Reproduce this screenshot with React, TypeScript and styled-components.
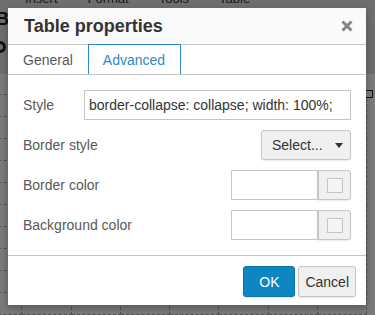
import React from "react"
import styled, { createGlobalStyle } from "styled-components"

const GlobalStyle = createGlobalStyle`
  html, body {
    margin: 0;
    padding: 0;
    background: #fff;
  }
  body {
    font-family: "Liberation Sans", Arial, sans-serif;
    overflow: hidden;
  }
  * {
    box-sizing: border-box;
  }
`

const Page = styled.div`
  position: relative;
  width: 375px;
  height: 315px;
  overflow: hidden;
`

/* editor that sits behind the modal */
const Editor = styled.div`
  display: flex;
  flex-direction: column;
  background: #fff;
  height: 100%;
`

const Chrome = styled.div`
  background: #e6e6e6;
  height: 76px;
  overflow: hidden;
`

const MenuBar = styled.div`
  display: flex;
  gap: 30px;
  padding-left: 25px;
  margin-top: -8px;
  height: 14px;
  line-height: 14px;
  font-size: 13px;
  color: #333;
`

const ToolRow = styled.div`
  display: flex;
  align-items: center;
  height: 27px;
  color: #222;
  &:first-of-type {
    margin-top: 10px;
  }
`

const BoldGlyph = styled.span`
  font-weight: 700;
  font-size: 18px;
  margin-left: -4px;
`

const Content = styled.div`
  padding-top: 20px;
  flex: 1;
`

const TableWrap = styled.div`
  position: relative;
  width: 395px;
  margin-left: -28px;
`

const EditorTable = styled.table`
  border-collapse: collapse;
  width: 100%;
  table-layout: fixed;

  td {
    border: 1px dashed #aaa;
    height: 22px;
    padding: 0;
  }
`

const ResizeHandle = styled.div`
  position: absolute;
  top: -4px;
  right: -6px;
  width: 8px;
  height: 8px;
  border: 1px solid #222;
  background: #fff;
`

const Overlay = styled.div`
  position: absolute;
  inset: 0;
  background: rgba(0, 0, 0, 0.52);
`

/* modal */
const Dialog = styled.div`
  position: absolute;
  left: 8px;
  top: 8px;
  width: 358px;
  height: 297px;
  background: #fff;
  display: flex;
  flex-direction: column;
  box-shadow: 0 3px 7px rgba(0, 0, 0, 0.3);
`

const Head = styled.div`
  height: 37px;
  display: flex;
  align-items: center;
  justify-content: space-between;
  padding: 0 13px 0 16px;
  background: #fafafa;
  border-bottom: 1px solid #c5c5c5;
`

const Title = styled.div`
  font-size: 18px;
  font-weight: 700;
  color: #333;
`

const CloseButton = styled.button`
  border: 0;
  background: none;
  padding: 0;
  width: 12px;
  height: 12px;
  display: flex;
  cursor: pointer;
`

const Tabs = styled.div`
  display: flex;
  height: 30px;
  border-bottom: 1px solid #c5c5c5;
`

const Tab = styled.div<{ $active?: boolean }>`
  height: ${(p) => (p.$active ? "30px" : "29px")};
  margin-top: ${(p) => (p.$active ? "-1px" : "0")};
  display: flex;
  align-items: center;
  padding: ${(p) => (p.$active ? "0 15px 0 14px" : "0 15px")};
  font-size: 14px;
  color: ${(p) => (p.$active ? "#2d8ac7" : "#595959")};
  border: ${(p) => (p.$active ? "1px solid #2d8ac7" : "0")};
  border-bottom: 0;
  background: #fff;
  cursor: pointer;
`

const Body = styled.div`
  flex: 1;
  display: flex;
  flex-direction: column;
  gap: 10px;
  padding: 15px;
`

const Row = styled.div`
  display: flex;
  align-items: center;
  justify-content: space-between;
  height: 30px;
`

const Label = styled.label`
  font-size: 14px;
  color: #595959;
`

const TextInput = styled.input<{ $width: number }>`
  width: ${(p) => p.$width}px;
  height: 30px;
  border: 1px solid #c5c5c5;
  padding: 0 4px;
  font-family: inherit;
  font-size: 14px;
  color: #333;
  background: #fff;
  outline: none;
`

const SelectButton = styled.button`
  width: 90px;
  height: 30px;
  display: flex;
  align-items: center;
  justify-content: space-between;
  padding: 0 7px 0 10px;
  border: 1px solid #c5c5c5;
  border-radius: 3px;
  background: #f0f0f0;
  box-shadow: 0 1px 1px rgba(0, 0, 0, 0.08);
  font-family: inherit;
  font-size: 14px;
  color: #333;
`

const Caret = styled.span`
  width: 0;
  height: 0;
  border-left: 4px solid transparent;
  border-right: 4px solid transparent;
  border-top: 5px solid #333;
`

const ColorGroup = styled.div`
  display: flex;
`

const SwatchButton = styled.button`
  width: 33px;
  height: 30px;
  display: flex;
  align-items: center;
  justify-content: center;
  padding: 0;
  border: 1px solid #c5c5c5;
  border-radius: 0 3px 3px 0;
  background: #f0f0f0;
  box-shadow: 0 1px 1px rgba(0, 0, 0, 0.08);
`

const Swatch = styled.span`
  width: 16px;
  height: 15px;
  border: 1px solid #c5c5c5;
  background: #f4f4f4;
`

const Foot = styled.div`
  height: 50px;
  display: flex;
  justify-content: flex-end;
  align-items: flex-start;
  gap: 3px;
  padding: 10px 10px 0 0;
  border-top: 1px solid #c5c5c5;
`

const Button = styled.button<{ $primary?: boolean }>`
  height: 31px;
  min-width: 52px;
  padding: 0 6px;
  border-radius: 3px;
  font-family: inherit;
  font-size: 14px;
  border: 1px solid ${(p) => (p.$primary ? "#0b74a8" : "#c5c5c5")};
  background: ${(p) => (p.$primary ? "#0c87c2" : "#f0f0f0")};
  color: ${(p) => (p.$primary ? "#fff" : "#333")};
  box-shadow: 0 1px 1px rgba(0, 0, 0, 0.1);
  cursor: pointer;
`

const ColorRow = ({ label }: { label: string }) => (
  <Row>
    <Label>{label}</Label>
    <ColorGroup>
      <TextInput $width={87} defaultValue="" />
      <SwatchButton>
        <Swatch />
      </SwatchButton>
    </ColorGroup>
  </Row>
)

export default function App() {
  const rows = Array.from({ length: 10 })
  const cols = Array.from({ length: 8 })

  return (
    <Page>
      <GlobalStyle />
      <Editor>
        <Chrome>
          <MenuBar>
            <span>Insert</span>
            <span>Format</span>
            <span>Tools</span>
            <span>Table</span>
          </MenuBar>
          <ToolRow>
            <BoldGlyph>B</BoldGlyph>
          </ToolRow>
          <ToolRow>
            <svg width="14" height="14" viewBox="0 0 14 14" style={{ marginLeft: -7 }}>
              <circle cx="7" cy="7" r="4.5" fill="none" stroke="#222" strokeWidth="3" />
            </svg>
          </ToolRow>
        </Chrome>
        <Content>
          <TableWrap>
            <EditorTable>
              <tbody>
                {rows.map((_, r) => (
                  <tr key={r}>
                    {cols.map((_, c) => (
                      <td key={c} />
                    ))}
                  </tr>
                ))}
              </tbody>
            </EditorTable>
            <ResizeHandle />
          </TableWrap>
        </Content>
      </Editor>

      <Overlay />

      <Dialog>
        <Head>
          <Title>Table properties</Title>
          <CloseButton aria-label="Close">
            <svg width="12" height="12" viewBox="0 0 12 12">
              <path d="M1.5 1.5 L10.5 10.5 M10.5 1.5 L1.5 10.5" stroke="#858585" strokeWidth="3" />
            </svg>
          </CloseButton>
        </Head>

        <Tabs>
          <Tab>General</Tab>
          <Tab $active>Advanced</Tab>
        </Tabs>

        <Body>
          <Row>
            <Label>Style</Label>
            <TextInput $width={267} defaultValue="border-collapse: collapse; width: 100%;" />
          </Row>
          <Row>
            <Label>Border style</Label>
            <SelectButton>
              Select...
              <Caret />
            </SelectButton>
          </Row>
          <ColorRow label="Border color" />
          <ColorRow label="Background color" />
        </Body>

        <Foot>
          <Button $primary>OK</Button>
          <Button>Cancel</Button>
        </Foot>
      </Dialog>
    </Page>
  )
}
